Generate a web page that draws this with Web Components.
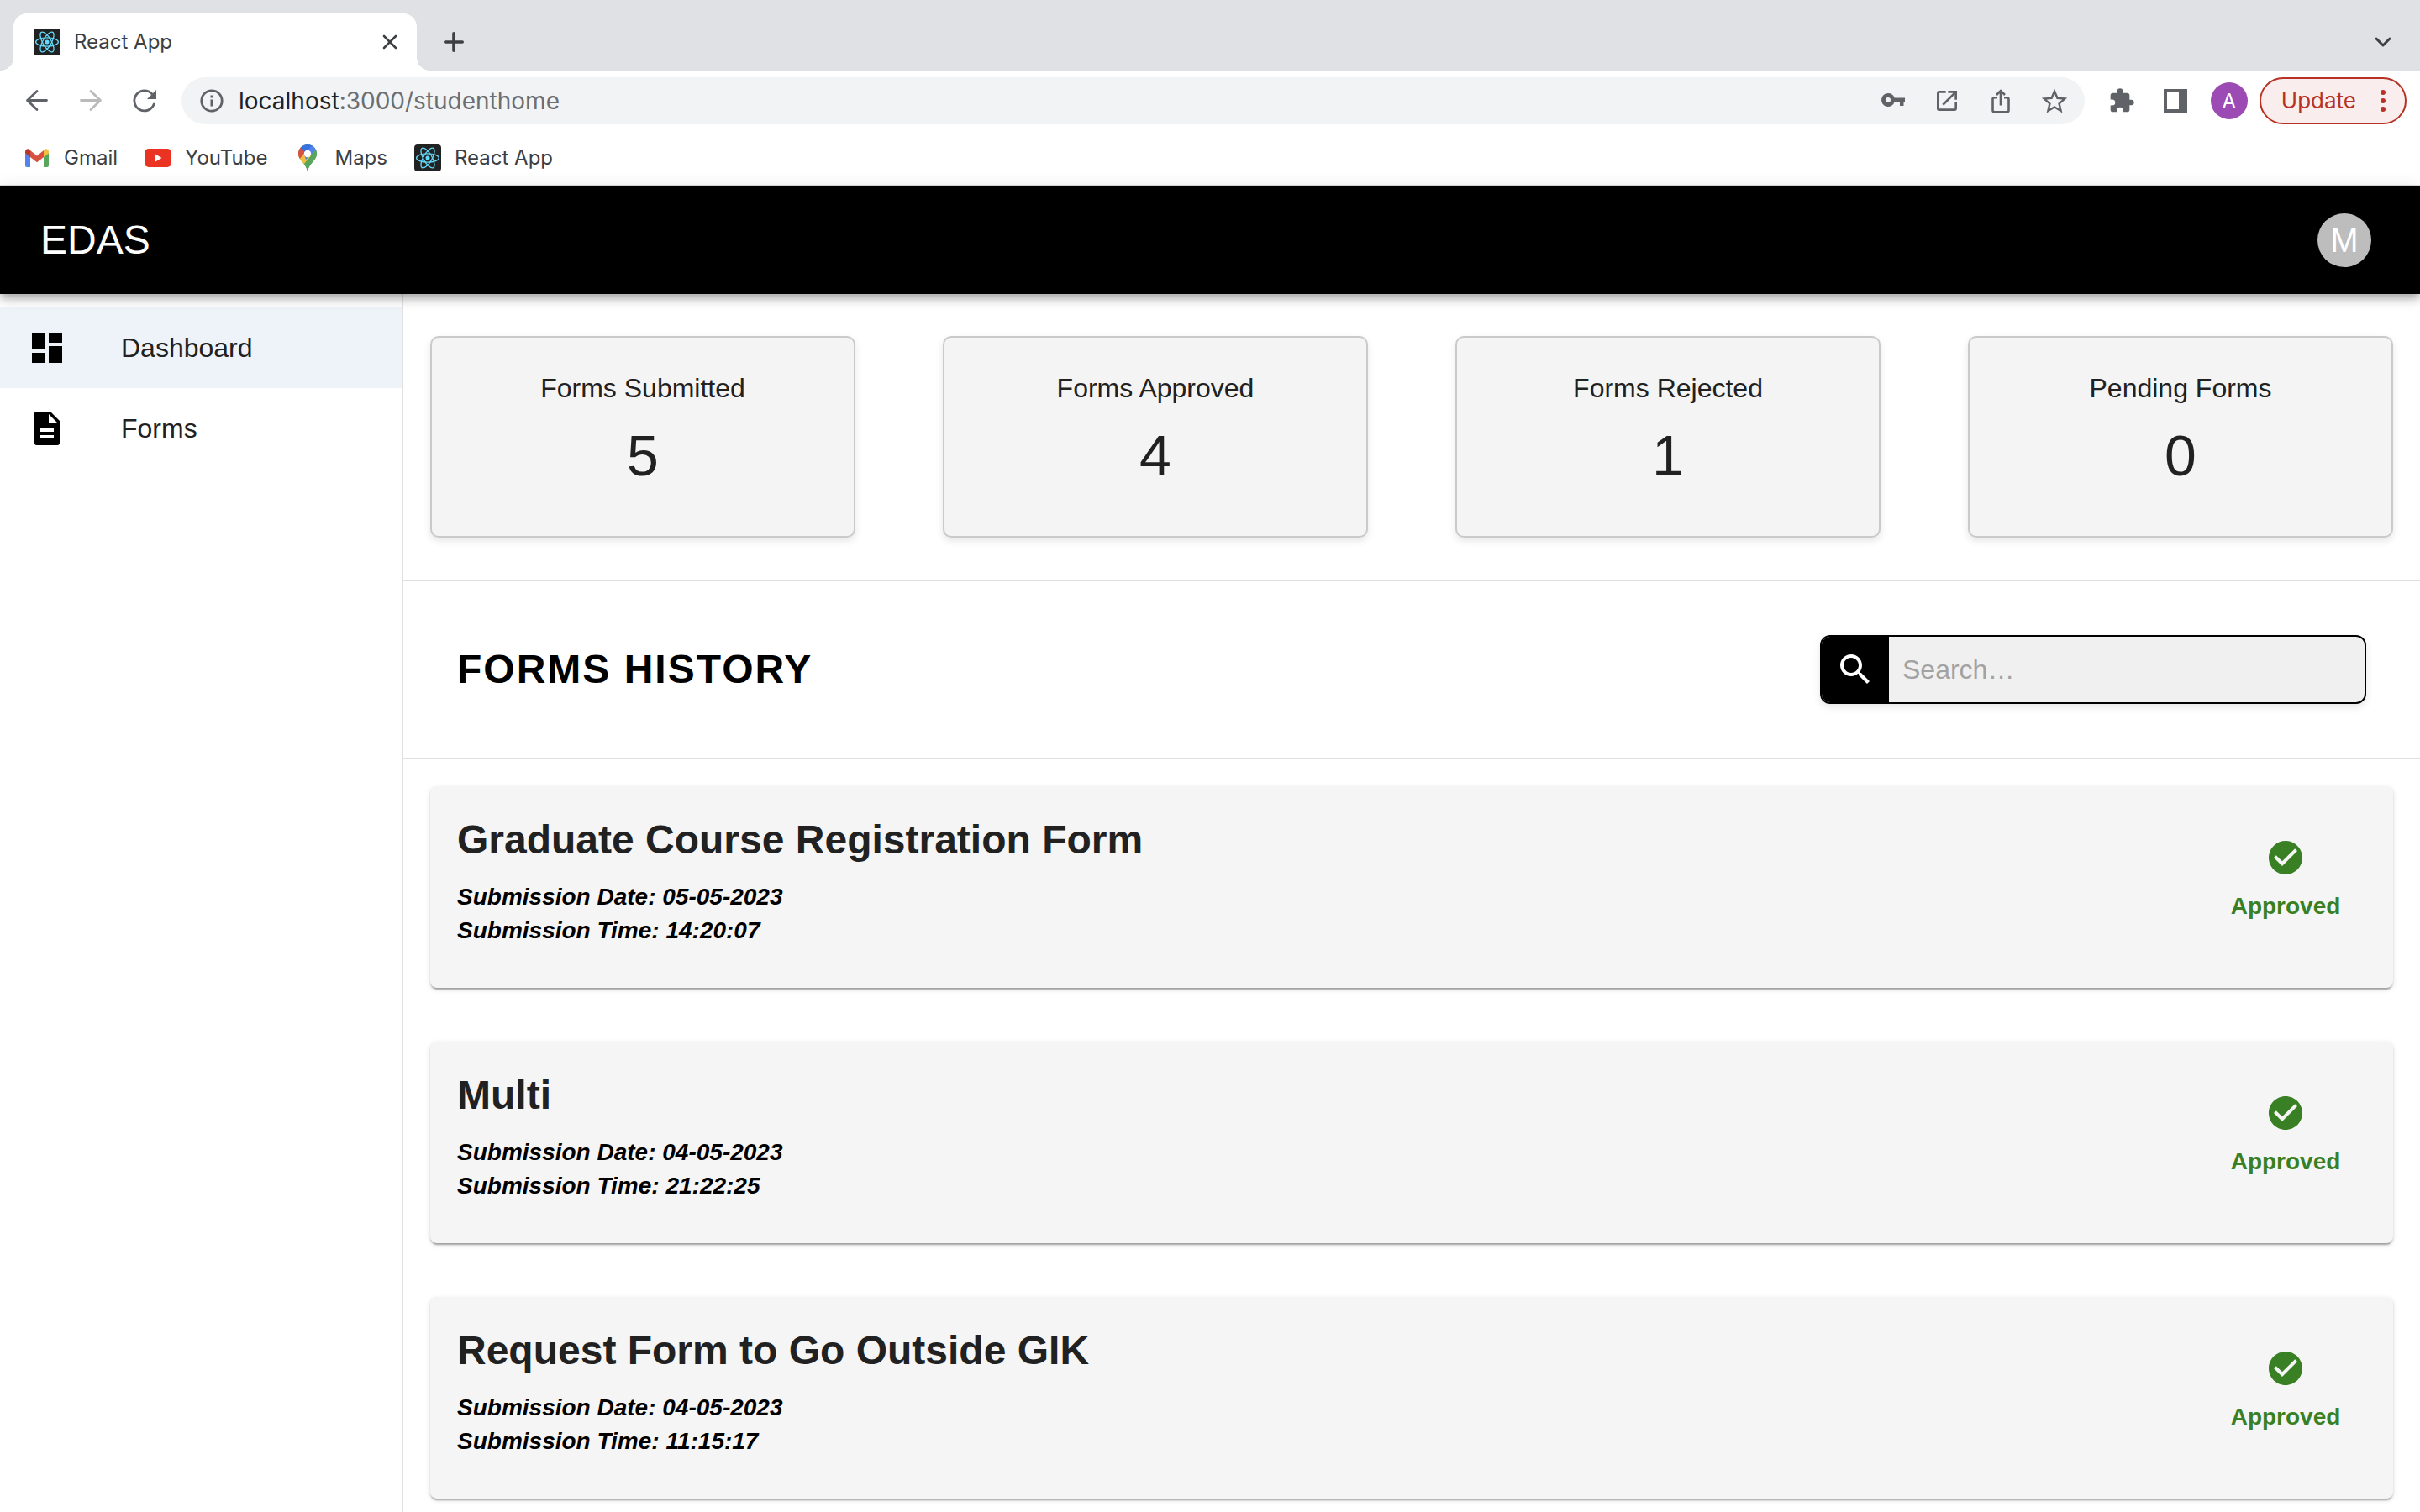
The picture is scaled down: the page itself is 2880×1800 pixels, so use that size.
<!DOCTYPE html>
<html lang="en">
<head>
<meta charset="utf-8">
<title>React App</title>
<style>
  html, body { margin: 0; height: 100%; }
  body { font-family: "Liberation Sans", Arial, sans-serif; background: #fff; color: #212121; overflow: hidden; }
</style>
</head>
<body>
<browser-window>
  <tab-strip slot="tabs"></tab-strip>
  <nav-toolbar slot="toolbar"></nav-toolbar>
  <bookmarks-bar slot="bookmarks"></bookmarks-bar>
  <student-home></student-home>
</browser-window>

<script>
const ICONS = {
  react: '<svg viewBox="0 0 32 32"><rect width="32" height="32" rx="4" fill="#222"/><g fill="none" stroke="#61dafb" stroke-width="1.3"><ellipse cx="16" cy="16" rx="13.4" ry="5.1"/><ellipse cx="16" cy="16" rx="13.4" ry="5.1" transform="rotate(60 16 16)"/><ellipse cx="16" cy="16" rx="13.4" ry="5.1" transform="rotate(120 16 16)"/></g><circle cx="16" cy="16" r="2.5" fill="#61dafb"/></svg>',
  close: '<svg viewBox="0 0 32 32"><path d="M9 9l14 14M23 9L9 23" stroke="#3c4043" stroke-width="2.6" stroke-linecap="round"/></svg>',
  plus: '<svg viewBox="0 0 32 32"><path d="M16 5.8v20.400M5.800 16h20.400" stroke="#3c4043" stroke-width="3.6" stroke-linecap="round"/></svg>',
  chevron: '<svg viewBox="0 0 32 32"><path d="M8 12l8 8 8-8" fill="none" stroke="#3c4043" stroke-width="3" stroke-linecap="round" stroke-linejoin="round"/></svg>',
  back: '<svg viewBox="0 0 32 32"><path d="M27.500 15.500H5M16 4.500L4.500 15.500 16 26.500" fill="none" stroke="#5f6368" stroke-width="2.8" stroke-linecap="round" stroke-linejoin="round"/></svg>',
  forward: '<svg viewBox="0 0 32 32"><path d="M4.500 15.500h22.500M16 4.500l11.500 11L16 26.500" fill="none" stroke="#bababa" stroke-width="2.8" stroke-linecap="round" stroke-linejoin="round"/></svg>',
  reload: '<svg viewBox="0 0 32 32"><path d="M27.200 20A12 12 0 1 1 24.500 7.500" fill="none" stroke="#5f6368" stroke-width="2.8" stroke-linecap="round"/><path d="M30 3v11H19z" fill="#5f6368"/></svg>',
  info: '<svg viewBox="0 0 32 32"><circle cx="16" cy="16" r="12.200" fill="none" stroke="#5f6368" stroke-width="2.8"/><path d="M14.500 14.500h3v8h-3zM14.500 9.500h3v3h-3z" fill="#5f6368"/></svg>',
  key: '<svg viewBox="0 0 32 32"><path fill="#5f6368" fill-rule="evenodd" d="M10 7a8 8 0 1 0 7.600 10.500H24V22h4.500v-4.500H30v-5H17.600A8 8 0 0 0 10 7zm0 5a3 3 0 1 1 0 6 3 3 0 0 1 0-6z"/></svg>',
  open: '<svg viewBox="0 0 24 24"><path fill="#5f6368" d="M19 19H5V5h6V3H5a2 2 0 0 0-2 2v14a2 2 0 0 0 2 2h14c1.100 0 2-.900 2-2v-6h-2v6zM13 3v2h4.590l-9.830 9.830 1.410 1.410L19 6.410V11h2V3h-8z"/></svg>',
  share: '<svg viewBox="0 0 32 32"><g fill="none" stroke="#5f6368" stroke-width="2.6"><path d="M12 12.300H8.500a2 2 0 0 0-2 2v13a2 2 0 0 0 2 2h15a2 2 0 0 0 2-2v-13a2 2 0 0 0-2-2H20"/><path d="M16 21.500V4.500M11 9l5-5 5 5"/></g></svg>',
  star: '<svg viewBox="1.500 1 21 21"><path fill="#5f6368" d="M22 9.240l-7.190-.620L12 2 9.190 8.630 2 9.240l5.460 4.730L5.820 21 12 17.270 18.180 21l-1.630-7.030L22 9.240zM12 15.400l-3.760 2.270 1-4.280-3.320-2.880 4.380-.380L12 6.100l1.710 4.040 4.380.380-3.320 2.880 1 4.280L12 15.400z"/></svg>',
  puzzle: '<svg viewBox="0 0 24 24"><path fill="#5f6368" d="M20.500 11H19V7c0-1.100-.900-2-2-2h-4V3.500a2.500 2.500 0 0 0-5 0V5H4c-1.100 0-2 .900-2 2v3.800h1.500a2.700 2.700 0 0 1 0 5.400H2V20c0 1.100.900 2 2 2h3.800v-1.500a2.700 2.700 0 0 1 5.400 0V22H17c1.100 0 2-.900 2-2v-4h1.500a2.500 2.500 0 0 0 0-5z"/></svg>',
  panel: '<svg viewBox="0 0 32 32"><path fill="#5f6368" fill-rule="evenodd" d="M2 2h28v28H2zM6 6v20h14V6z"/></svg>',
  dots: '<svg viewBox="0 0 32 32"><g fill="#b73224"><circle cx="16" cy="6" r="3"/><circle cx="16" cy="16" r="3"/><circle cx="16" cy="26" r="3"/></g></svg>',
  gmail: '<svg viewBox="0 0 32 32"><path fill="#5383ec" d="M2 10v15a2 2 0 0 0 2 2h4V14z"/><path fill="#58a55c" d="M30 10v15a2 2 0 0 1-2 2h-4V14z"/><path fill="#d85140" d="M8 7l8 6.500L24 7v8l-8 6.300L8 15z"/><path fill="#b3372a" d="M2 8.500C2 5.200 5.500 4 8 6.500V15l-6-4.800z"/><path fill="#f1bf42" d="M30 8.500C30 5.200 26.500 4 24 6.500V15l6-4.800z"/></svg>',
  youtube: '<svg viewBox="0 0 32 32"><rect y="5" width="32" height="22" rx="5" fill="#ea3323"/><path d="M13 11.500v9l7.500-4.500z" fill="#fff"/></svg>',
  maps: '<svg viewBox="0 0 32 32"><defs><clipPath id="pin"><path d="M16 0C9.500 0 5 5 5 11c0 8 8.500 10 11 21 2.500-11 11-13 11-21C27 5 22.500 0 16 0z"/></clipPath></defs><g clip-path="url(#pin)"><path fill="#58a55c" d="M0 0h32v32H0z"/><path fill="#f1bf42" d="M0 14L12 8l8 6L10 26 0 24z"/><path fill="#d85140" d="M0 2l8 1 6 5-8 10H0z"/><path fill="#3871e0" d="M7.500 4L10-2h12v4l-8 8z"/><path fill="#5383ec" d="M21.500 1L32 0v7l-6-.500L14 18l-2-6z"/><path fill="#58a55c" d="M26 6.500L12 23l2 9h18V6z"/></g><circle cx="16" cy="11" r="4.200" fill="#fff"/></svg>',
  dashboard: '<svg viewBox="0 0 24 24"><path d="M3 13h8V3H3v10zm0 8h8v-6H3v6zm10 0h8V11h-8v10zm0-18v6h8V3h-8z"/></svg>',
  forms: '<svg viewBox="0 0 24 24"><path d="M14 2H6c-1.100 0-1.990.900-1.990 2L4 20c0 1.100.890 2 1.990 2H18c1.100 0 2-.900 2-2V8l-6-6zm2 16H8v-2h8v2zm0-4H8v-2h8v2zm-3-5V3.500L18.500 9H13z"/></svg>',
  search: '<svg viewBox="0 0 24 24"><path fill="#fff" d="M15.500 14h-.790l-.280-.270C15.410 12.590 16 11.110 16 9.500 16 5.910 13.090 3 9.500 3S3 5.910 3 9.500 5.910 16 9.500 16c1.610 0 3.090-.590 4.230-1.570l.270.280v.790l5 4.990L20.490 19l-4.990-5zm-6 0C7.010 14 5 11.990 5 9.500S7.010 5 9.500 5 14 7.010 14 9.500 11.990 14 9.500 14z"/></svg>',
  check: '<svg viewBox="0 0 24 24"><path fill="#388023" d="M12 2C6.480 2 2 6.480 2 12s4.480 10 10 10 10-4.480 10-10S17.520 2 12 2zm-2 15l-5-5 1.410-1.410L10 14.170l7.590-7.590L19 8l-9 9z"/></svg>'
};

const BASE = ':host,*{box-sizing:border-box}button{font:inherit;color:inherit;background:none;border:0;padding:0;margin:0;display:flex;align-items:center;cursor:pointer}a{color:inherit;text-decoration:none}h1,h2,h3,p{margin:0;padding:0}';

function define(name, css, html) {
  customElements.define(name, class extends HTMLElement {
    constructor() {
      super();
      const root = this.attachShadow({ mode: 'open' });
      root.innerHTML = '<style>' + BASE + css + '</style>' + (typeof html === 'function' ? html(this) : html);
    }
  });
}

define('ui-icon',
  ':host{display:block;flex:none;width:32px;height:32px}:host([size="large"]){width:48px;height:48px}svg{display:block;width:100%;height:100%}',
  el => ICONS[el.getAttribute('name')]);

define('browser-window',
  ':host{display:flex;flex-direction:column;min-height:100vh}.chrome{font-family:Inter,"Noto Sans",sans-serif;color:#3c4043;border-bottom:2px solid #dadce0}main{flex:1;display:flex;flex-direction:column}',
  '<div class="chrome"><slot name="tabs"></slot><slot name="toolbar"></slot><slot name="bookmarks"></slot></div><main><slot></slot></main>');

define('tab-strip',
  `:host{display:flex;align-items:stretch;height:84px;background:#dfe1e5;padding:16px 20px 0 16px;font-size:24px;line-height:32px}
  .tab{position:relative;width:480px;display:flex;align-items:center;gap:16px;padding:0 16px 0 24px;background:#fff;border-radius:16px 16px 0 0}
  .tab::before,.tab::after{content:"";position:absolute;bottom:0;width:16px;height:16px}
  .tab::before{left:-16px;background:radial-gradient(circle at 0 0,transparent 16px,#fff 16px)}
  .tab::after{right:-16px;background:radial-gradient(circle at 100% 0,transparent 16px,#fff 16px)}
  .title{flex:1}.new{margin-left:28px}.list{margin-left:auto;margin-right:8px}`,
  `<div class="tab"><ui-icon name="react"></ui-icon><span class="title">React App</span><button aria-label="Close tab"><ui-icon name="close"></ui-icon></button></div>
  <button class="new" aria-label="New tab"><ui-icon name="plus"></ui-icon></button>
  <button class="list" aria-label="Search tabs"><ui-icon name="chevron"></ui-icon></button>`);

define('nav-toolbar',
  `:host{display:flex;align-items:center;padding:8px 16px 8px 28px}
  .nav{display:flex;gap:32px;margin-right:28px}
  .omni{flex:1;height:56px;border-radius:28px;background:#f1f3f4;display:flex;align-items:center;gap:16px;padding:0 20px;font-size:28px;line-height:36px}
  .url{flex:1;color:#6b6e72}.url b{font-weight:400;color:#202124}
  .acts{display:flex;gap:32px}.ext{margin-left:28px}
  .me{width:44px;height:44px;border-radius:50%;background:#9c4bb5;color:#fff;font-size:24px;justify-content:center;margin:0 14px 0 26px}
  .update{height:56px;border:2px solid #b73224;border-radius:28px;background:#f9eeed;color:#b73224;font-size:26px;line-height:32px;padding:0 10px 0 24px;gap:16px}`,
  `<div class="nav"><button aria-label="Back"><ui-icon name="back"></ui-icon></button><button aria-label="Forward"><ui-icon name="forward"></ui-icon></button><button aria-label="Reload"><ui-icon name="reload"></ui-icon></button></div>
  <div class="omni"><ui-icon name="info"></ui-icon><span class="url"><b>localhost</b>:3000/studenthome</span>
  <div class="acts"><button aria-label="Passwords"><ui-icon name="key"></ui-icon></button><button aria-label="Open"><ui-icon name="open"></ui-icon></button><button aria-label="Share"><ui-icon name="share"></ui-icon></button><button aria-label="Bookmark"><ui-icon name="star"></ui-icon></button></div></div>
  <div class="acts ext"><button aria-label="Extensions"><ui-icon name="puzzle"></ui-icon></button><button aria-label="Side panel"><ui-icon name="panel"></ui-icon></button></div>
  <button class="me">A</button><button class="update"><span>Update</span><ui-icon name="dots"></ui-icon></button>`);

define('bookmarks-bar',
  ':host{display:flex;gap:32px;padding:16px 28px;height:64px;font-size:24px;line-height:32px}a{display:flex;gap:16px;align-items:center}',
  `<a href="#"><ui-icon name="gmail"></ui-icon>Gmail</a><a href="#"><ui-icon name="youtube"></ui-icon>YouTube</a><a href="#"><ui-icon name="maps"></ui-icon>Maps</a><a href="#"><ui-icon name="react"></ui-icon>React App</a>`);

define('app-header',
  `:host{display:flex;align-items:center;justify-content:space-between;height:128px;padding:0 58px 0 48px;background:#000;color:#fff;position:relative;z-index:1;box-shadow:0 4px 8px -2px rgba(0,0,0,.2),0 8px 10px rgba(0,0,0,.14),0 2px 20px rgba(0,0,0,.12)}
  h1{font-size:48px;line-height:64px;font-weight:400}button{width:64px;height:64px;border-radius:50%;background:#bdbdbd;justify-content:center;font-size:40px;line-height:40px}`,
  '<h1><slot></slot></h1><button>M</button>');

define('side-nav',
  ':host{display:block;width:480px;flex:none;border-right:2px solid #e0e0e0;padding-top:16px}',
  '<nav><slot></slot></nav>');

define('nav-item',
  ':host{display:block;font-size:32px;line-height:48px}:host([selected]){background:#eef3fa}a{display:flex;align-items:center;gap:64px;height:96px;padding:0 32px}ui-icon{color:#000}',
  el => '<a href="#"><ui-icon size="large" name="' + el.getAttribute('icon') + '"></ui-icon><slot></slot></a>');

define('stat-card',
  `:host{display:block;background:#f4f4f4;border:2px solid #cacaca;border-radius:10px;box-shadow:0 4px 10px rgba(0,0,0,.1);padding:36px 32px 54px;text-align:center}
  h2{font-size:32px;line-height:48px;font-weight:400}p{margin-top:14px;font-size:68px;line-height:84px}`,
  el => '<h2><slot></slot></h2><p>' + el.getAttribute('value') + '</p>');

define('search-box',
  `:host{display:flex;width:650px;height:82px;border:2px solid #000;border-radius:12px;background:#f0f0f0;overflow:hidden;box-shadow:0 4px 10px rgba(0,0,0,.1)}
  label{width:80px;background:#000;display:flex;align-items:center;justify-content:center}
  input{flex:1;min-width:0;border:0;outline:0;background:none;font:32px/48px "Liberation Sans",Arial,sans-serif;padding:0 16px;color:#212121}input::placeholder{color:#a2a2a2;opacity:1}`,
  '<label for="q" aria-label="Search"><ui-icon size="large" name="search"></ui-icon></label><input id="q" type="text" placeholder="Search…">');

define('form-card',
  `:host{display:flex;align-items:center;justify-content:space-between;background:#f5f5f5;border-radius:8px;padding:32px 32px 48px;box-shadow:0 4px 2px -2px rgba(0,0,0,.2),0 2px 2px rgba(0,0,0,.14),0 2px 6px rgba(0,0,0,.12)}
  h3{font-size:48px;line-height:64px;margin-bottom:16px}p{font-size:28px;line-height:40px;font-weight:700;font-style:italic;color:#000}
  .status{width:192px;display:flex;flex-direction:column;align-items:center;gap:14px;color:#388023;font-size:28px;line-height:40px;font-weight:700}`,
  el => '<div><h3><slot></slot></h3><p>Submission Date: ' + el.getAttribute('date') + '</p><p>Submission Time: ' + el.getAttribute('time') + '</p></div><div class="status"><ui-icon size="large" name="check"></ui-icon><span>Approved</span></div>');

define('student-home',
  `:host{display:flex;flex-direction:column;flex:1}
  .body{flex:1;display:flex}.content{flex:1;min-width:0}
  .stats{display:grid;grid-template-columns:repeat(4,1fr);gap:104px;padding:50px 32px;border-bottom:2px solid #e0e0e0}
  .history{display:flex;align-items:center;justify-content:space-between;padding:64px;border-bottom:2px solid #e0e0e0}
  .history h2{font-size:48px;line-height:64px;letter-spacing:2px;color:#000}
  .list{display:flex;flex-direction:column;gap:64px;padding:32px}`,
  `<app-header>EDAS</app-header>
  <div class="body">
    <side-nav><nav-item icon="dashboard" selected>Dashboard</nav-item><nav-item icon="forms">Forms</nav-item></side-nav>
    <section class="content">
      <div class="stats"><stat-card value="5">Forms Submitted</stat-card><stat-card value="4">Forms Approved</stat-card><stat-card value="1">Forms Rejected</stat-card><stat-card value="0">Pending Forms</stat-card></div>
      <div class="history"><h2>FORMS HISTORY</h2><search-box></search-box></div>
      <div class="list">
        <form-card date="05-05-2023" time="14:20:07">Graduate Course Registration Form</form-card>
        <form-card date="04-05-2023" time="21:22:25">Multi</form-card>
        <form-card date="04-05-2023" time="11:15:17">Request Form to Go Outside GIK</form-card>
      </div>
    </section>
  </div>`);
</script>
</body>
</html>
